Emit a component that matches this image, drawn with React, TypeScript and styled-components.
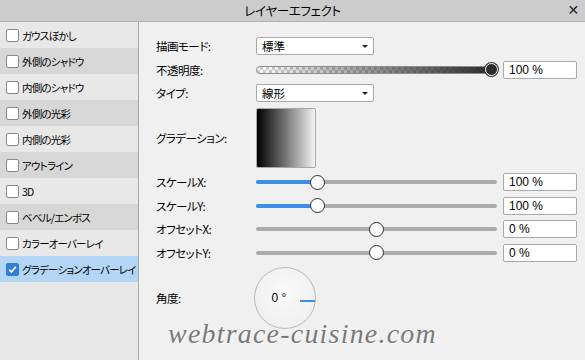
import React from "react";
import styled, { createGlobalStyle } from "styled-components";

const Global = createGlobalStyle`
  html, body { margin: 0; padding: 0; background: #f0f0f0; }
  * { box-sizing: border-box; }
`;

const JP = `"Noto Sans CJK JP", "Noto Sans", sans-serif`;

const Window = styled.div`
  position: relative;
  width: 585px;
  height: 360px;
  display: flex;
  flex-direction: column;
  background: #f0f0f0;
  font-family: ${JP};
  font-feature-settings: "palt";
  color: #000;
  overflow: hidden;
`;

const TitleBar = styled.div`
  height: 22px;
  flex: none;
  background: #cccccc;
  border-bottom: 1px solid #b4b4b4;
  display: flex;
  align-items: center;
  justify-content: center;
  position: relative;
  font-size: 12.5px;
  letter-spacing: -0.3px;
`;

const Close = styled.span`
  position: absolute;
  right: 6px;
  top: 2px;
  font-family: "DejaVu Sans", sans-serif;
  font-size: 14px;
  font-weight: bold;
  color: #222;
`;

const Body = styled.div`
  flex: 1;
  display: flex;
`;

const Sidebar = styled.div`
  width: 139px;
  flex: none;
  background: #e8e8e8;
  border-right: 1px solid #a8a8a8;
  display: flex;
  flex-direction: column;
`;

const Item = styled.div<{ $shade: "light" | "dark" | "sel" }>`
  height: 26px;
  display: flex;
  align-items: center;
  padding-left: 6px;
  gap: 3px;
  font-size: 10.5px;
  letter-spacing: -0.8px;
  white-space: nowrap;
  background: ${(p) =>
    p.$shade === "sel" ? "#b3d6f6" : p.$shade === "dark" ? "#d7d7d7" : "#e8e8e8"};
`;

const Box = styled.span<{ $on?: boolean }>`
  width: 13px;
  height: 13px;
  flex: none;
  border-radius: 2px;
  background: ${(p) => (p.$on ? "#2f7fd9" : "#fff")};
  border: 1px solid ${(p) => (p.$on ? "#2f7fd9" : "#8a8a8a")};
  display: flex;
  align-items: center;
  justify-content: center;
`;

const Panel = styled.div`
  flex: 1;
  padding: 15px 8px 0 17px;
  display: grid;
  grid-template-columns: 94px 241px 74px;
  column-gap: 6px;
  grid-template-rows: 18px 18px 18px 60px 18px 18px 18px 18px 62px;
  row-gap: 5.5px;
  align-items: center;
`;

const Label = styled.div`
  font-size: 11.5px;
  letter-spacing: -0.5px;
  white-space: nowrap;
`;

const Select = styled.div`
  width: 118px;
  height: 18px;
  background: #fff;
  border: 1px solid #a9a9a9;
  border-radius: 2px;
  display: flex;
  align-items: center;
  justify-content: space-between;
  padding: 0 5px 0 5px;
  font-size: 11.5px;
`;

const Caret = styled.span`
  width: 0;
  height: 0;
  border-left: 3px solid transparent;
  border-right: 3px solid transparent;
  border-top: 3px solid #222;
`;

const Input = styled.div`
  height: 18px;
  background: #fff;
  border: 1px solid #a9a9a9;
  border-radius: 2px;
  display: flex;
  align-items: center;
  padding-left: 5px;
  font-family: "Liberation Sans", Arial, sans-serif;
  font-size: 12px;
`;

const SliderWrap = styled.div`
  position: relative;
  height: 18px;
  display: flex;
  align-items: center;
`;

const Track = styled.div`
  width: 100%;
  height: 4px;
  border-radius: 2px;
  background: #acacac;
  position: relative;
`;

const Fill = styled.div`
  position: absolute;
  left: 0;
  top: 0;
  bottom: 0;
  border-radius: 2px;
  background: #3b8fe8;
`;

const Thumb = styled.div`
  position: absolute;
  top: 50%;
  width: 15px;
  height: 15px;
  margin: -7.5px 0 0 -7.5px;
  border-radius: 50%;
  background: #fff;
  border: 1px solid #2a2a2a;
`;

const AlphaTrack = styled.div`
  width: 100%;
  height: 8px;
  border-radius: 4px;
  border: 1px solid #8c8c8c;
  background:
    linear-gradient(to right, rgba(40, 40, 40, 0), rgba(40, 40, 40, 1)),
    repeating-conic-gradient(#d0d0d0 0% 25%, #ffffff 0% 50%) 0 0 / 6px 6px;
`;

const AlphaThumb = styled.div`
  position: absolute;
  top: 50%;
  right: -1px;
  width: 13px;
  height: 13px;
  margin-top: -6.5px;
  border-radius: 50%;
  background: #2e2e2e;
  border: 1.5px solid #fff;
  box-shadow: 0 0 0 1px #333;
`;

const Preview = styled.div`
  width: 60px;
  height: 60px;
  border: 1px solid #a9a9a9;
  border-radius: 2px;
  background: linear-gradient(to right, #000 0%, #777 50%, #f4f4f4 100%);
`;

const Dial = styled.div`
  width: 62px;
  height: 62px;
  margin-left: -2px;
  border-radius: 50%;
  border: 1px solid #b9b9b9;
  background: radial-gradient(circle at 50% 40%, #fafafa 0%, #ececec 100%);
  position: relative;
  display: flex;
  align-items: center;
  justify-content: center;
  font-family: "Liberation Sans", Arial, sans-serif;
  font-size: 12px;
  padding-right: 12px;
`;

const Needle = styled.div`
  position: absolute;
  right: 0;
  top: 50%;
  width: 15px;
  height: 2px;
  margin-top: 2px;
  background: #3b8fe8;
`;

const Watermark = styled.div`
  position: absolute;
  left: 168px;
  top: 318px;
  font-family: "Liberation Serif", serif;
  font-style: italic;
  font-size: 28px;
  letter-spacing: 1.2px;
  color: #6e6e6e;
  text-shadow: 1px 1px 0 #ffffff;
  opacity: 0.9;
`;

const items = [
  "ガウスぼかし",
  "外側のシャドウ",
  "内側のシャドウ",
  "外側の光彩",
  "内側の光彩",
  "アウトライン",
  "3D",
  "ベベル/エンボス",
  "カラーオーバーレイ",
  "グラデーションオーバーレイ",
];

function Slider({ pos, fill }: { pos: number; fill?: boolean }) {
  return (
    <SliderWrap>
      <Track>
        {fill && <Fill style={{ width: `${pos}%` }} />}
      </Track>
      <Thumb style={{ left: `${pos}%` }} />
    </SliderWrap>
  );
}

export default function App() {
  return (
    <>
      <Global />
      <Window>
        <TitleBar>
          レイヤーエフェクト
          <Close>✕</Close>
        </TitleBar>
        <Body>
          <Sidebar>
            {items.map((t, i) => {
              const sel = i === items.length - 1;
              return (
                <Item key={t} $shade={sel ? "sel" : i % 2 ? "dark" : "light"}>
                  <Box $on={sel}>
                    {sel && (
                      <svg width="9" height="9" viewBox="0 0 9 9">
                        <path d="M1.2 4.6 L3.5 7 L7.8 1.8" stroke="#fff" strokeWidth="1.8" fill="none" />
                      </svg>
                    )}
                  </Box>
                  {t}
                </Item>
              );
            })}
          </Sidebar>
          <Panel>
            <Label>描画モード:</Label>
            <Select>標準<Caret /></Select>
            <span />

            <Label>不透明度:</Label>
            <SliderWrap>
              <AlphaTrack />
              <AlphaThumb />
            </SliderWrap>
            <Input>100 %</Input>

            <Label>タイプ:</Label>
            <Select>線形<Caret /></Select>
            <span />

            <Label>グラデーション:</Label>
            <Preview />
            <span />

            <Label>スケールX:</Label>
            <Slider pos={25.7} fill />
            <Input>100 %</Input>

            <Label>スケールY:</Label>
            <Slider pos={25.7} fill />
            <Input>100 %</Input>

            <Label>オフセットX:</Label>
            <Slider pos={50} />
            <Input>0 %</Input>

            <Label>オフセットY:</Label>
            <Slider pos={50} />
            <Input>0 %</Input>

            <Label>角度:</Label>
            <Dial>
              0 °
              <Needle />
            </Dial>
            <span />
          </Panel>
        </Body>
        <Watermark>webtrace-cuisine.com</Watermark>
      </Window>
    </>
  );
}
